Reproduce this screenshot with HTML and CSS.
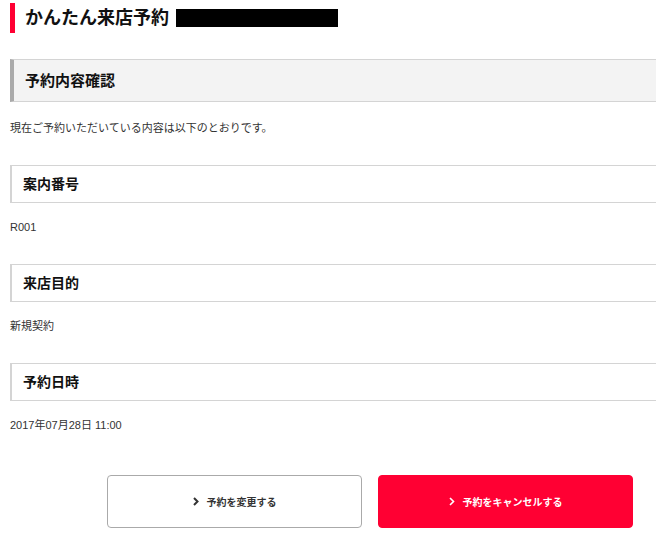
FILE: index.html
```html
<!DOCTYPE html>
<html lang="ja">
	<head>
		<meta charset="UTF-8" />
		<meta name="viewport" content="width=device-width, initial-scale=1.0" />
		<title>かんたん来店予約</title>
		<link rel="stylesheet" href="styles.css">
	</head>
	<body>
		<div class="page">
			<h1 class="title">かんたん来店予約<span class="masked"></span></h1>

			<h2 class="section">予約内容確認</h2>
			<p class="lead">現在ご予約いただいている内容は以下のとおりです。</p>

			<dl class="details">
				<dt>案内番号</dt>
				<dd>R001</dd>
				<dt>来店目的</dt>
				<dd>新規契約</dd>
				<dt>予約日時</dt>
				<dd>2017年07月28日 11:00</dd>
			</dl>

			<div class="actions">
				<a class="btn" href="#">
					<svg class="chev" width="6" height="9" viewBox="0 0 6 9"><path d="M1 1 L4.5 4.5 L1 8" fill="none" stroke="currentColor" stroke-width="2"/></svg>
					予約を変更する
				</a>
				<a class="btn btn-cancel" href="#">
					<svg class="chev" width="6" height="9" viewBox="0 0 6 9"><path d="M1 1 L4.5 4.5 L1 8" fill="none" stroke="currentColor" stroke-width="1.6"/></svg>
					予約をキャンセルする
				</a>
			</div>
		</div>
	</body>
</html>
```

FILE: styles.css
```css
html {
	overflow-x: hidden;
}

body {
	margin: 0;
	font-family: "Liberation Sans", "Noto Sans CJK JP", sans-serif;
	color: #333;
}

.page {
	/* wider than the window, the boxes run off the right edge */
	width: 720px;
	margin-left: 10px;
}

.title {
	margin: 3px 0 0;
	height: 30px;
	line-height: 30px;
	padding-left: 10px;
	border-left: 5px solid #ff0033;
	font-size: 18px;
	font-weight: bold;
	color: #111;
	display: flex;
	align-items: center;
}

.masked {
	display: inline-block;
	width: 162px;
	height: 18px;
	margin-left: 7px;
	background: #000;
}

.section {
	margin: 26px 0 0;
	height: 41px;
	line-height: 41px;
	padding-left: 11px;
	background: #f3f3f3;
	border-top: 1px solid #d4d4d4;
	border-bottom: 1px solid #d4d4d4;
	border-left: 4px solid #aaa;
	font-size: 15px;
	font-weight: bold;
	color: #111;
}

.lead {
	margin: 20px 0 0;
	font-size: 11px;
	line-height: 12px;
}

.details {
	margin: 31px 0 0;
}

.details dt {
	height: 36px;
	line-height: 36px;
	padding-left: 11px;
	border-top: 1px solid #d4d4d4;
	border-bottom: 1px solid #d4d4d4;
	border-left: 2px solid #d4d4d4;
	font-size: 14px;
	font-weight: bold;
	color: #111;
}

.details dd {
	margin: 18px 0 31px;
	font-size: 11px;
	line-height: 12px;
}

.actions {
	display: flex;
	justify-content: center;
	gap: 16px;
	margin-top: 44px;
}

.btn {
	width: 255px;
	height: 53px;
	box-sizing: border-box;
	display: flex;
	align-items: center;
	justify-content: center;
	gap: 8px;
	border: 1px solid #aaa;
	border-radius: 4px;
	background: #fff;
	color: #333;
	font-size: 10px;
	font-weight: bold;
	text-decoration: none;
}

.btn-cancel {
	background: #ff0033;
	border-color: #ff0033;
	color: #fff;
}

.chev {
	display: block;
}
```
